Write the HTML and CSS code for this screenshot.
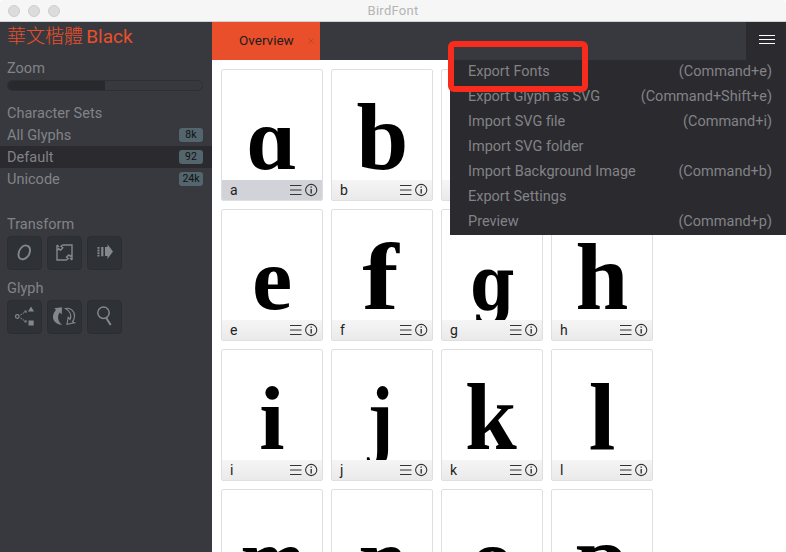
FILE: index.html
```html
<!DOCTYPE html>
<html lang="en">
<head>
<meta charset="utf-8">
<title>BirdFont</title>
<link rel="stylesheet" href="styles.css">
</head>
<body>
<header class="titlebar">
  <div class="lights"><i></i><i></i><i></i></div>
  <span>BirdFont</span>
</header>
<div class="app">
  <aside class="sidebar">
    <h1 class="font-name"><span class="cjk">華文楷體</span> Black</h1>
    <div class="label zoom-label">Zoom</div>
    <div class="slider"><div class="fill"></div></div>
    <div class="label sets-label">Character Sets</div>
    <div class="set"><span>All Glyphs</span><b>8k</b></div>
    <div class="set selected"><span>Default</span><b>92</b></div>
    <div class="set"><span>Unicode</span><b>24k</b></div>
    <div class="label transform-label">Transform</div>
    <div class="tools">
      <button class="tool"><svg viewBox="0 0 35 34"><path d="M20.500 9.800C24 11 23.500 16.500 21.300 19.800c-2.300 3.500-6.800 4.500-8.800 2.200-2-2.400-.8-7.300 1.500-10 1.800-2.200 4.500-3 6.500-2.200z" fill="none" stroke="#84888c" stroke-width="1.900"/></svg></button>
      <button class="tool"><svg viewBox="0 0 35 34"><path d="M15.500 9h9.500v9.500M19.500 24H10V14.500M10 9v5.500l1.800-1.800 1.700 1.500 2.300-2.400-1.800-1.500L15.500 9M25 24v-5.500l-1.600 1.700-1.700-1.300-2.200 2.300 1.700 1.400L19.500 24M10 9l2 2M25 24l-2-2" fill="none" stroke="#84888c" stroke-width="1.400"/></svg></button>
      <button class="tool"><svg viewBox="0 0 35 34" fill="#84888c"><path d="M18 11h2.500V8.200l5.500 7.300-5.500 7.500v-3H18zM14.200 11h2.200v9.200h-2.200z"/><path d="M11.500 11v9.500" fill="none" stroke="#84888c" stroke-width="2" stroke-dasharray="1.800 .8"/></svg></button>
    </div>
    <div class="label glyph-label">Glyph</div>
    <div class="tools">
      <button class="tool"><svg viewBox="0 0 35 34" fill="#84888c"><circle cx="10.300" cy="16.500" r="1.800" fill="none" stroke="#84888c" stroke-width="1.200"/><path d="M13.500 15l6-4m-2.300.2 2.300-.2-.7 2M13.500 18l6 4m-2.300-.2 2.300.2-.7-2" fill="none" stroke="#84888c" stroke-width="1" stroke-dasharray="2 .8"/><path d="M24 6.500l3 5h-6zM21.500 20.500h5.200v5h-5.200z"/></svg></button>
      <button class="tool"><svg viewBox="0 0 35 34"><path d="M15 25C8 24.500 4.500 19 6.500 14c.7-2 1.500-3 2.500-4L7.300 8.200l7.700-1-.3 7.300-2-2c-3 4-1.600 9 2.300 12.500z" fill="#84888c"/><path d="M18.500 8.500c5-1 9.500 2.500 9 8-.2 2.200-1 4-2 5.200l2 1-7.500 1.500 1.200-7 1.800 2.200c2-4 0-8.500-4.500-10.900z" fill="none" stroke="#84888c" stroke-width="1.100"/></svg></button>
      <button class="tool"><svg viewBox="0 0 35 34"><circle cx="16.500" cy="12.800" r="5.700" fill="none" stroke="#84888c" stroke-width="1.500"/><path d="M19.300 18l4.400 7" stroke="#84888c" stroke-width="2"/></svg></button>
    </div>
  </aside>
  <main class="main">
    <nav class="tabs">
      <div class="tab"><span>Overview</span><svg viewBox="0 0 6 6"><path d="M.5 .5l5 5M5.500 .5l-5 5" stroke="#c2452a" stroke-width="1"/></svg></div>
      <div class="menu-button"><i></i><i></i><i></i></div>
    </nav>
    <section class="grid" id="grid"></section>
    <div class="menu">
      <div><span>Export Fonts</span><span>(Command+e)</span></div>
      <div><span>Export Glyph as SVG</span><span>(Command+Shift+e)</span></div>
      <div><span>Import SVG file</span><span>(Command+i)</span></div>
      <div><span>Import SVG folder</span></div>
      <div><span>Import Background Image</span><span>(Command+b)</span></div>
      <div><span>Export Settings</span></div>
      <div><span>Preview</span><span>(Command+p)</span></div>
    </div>
    <div class="highlight"></div>
  </main>
</div>
<script src="glyphs.js"></script>
</body>
</html>
```
FILE: glyphs.js
```js
// name, drawn character, centre x, font size, horizontal scale, family class
const glyphs = [
  ["a", "ɑ", 49.5, 88, 1, ""], ["b", "b", 50.5, 96, 0.97, ""], ["c", "c", 50, 88, 1, ""], ["d", "d", 50, 96, 1, ""],
  ["e", "e", 50, 88, 1.03, ""], ["f", "f", 48.5, 96, 1.14, ""], ["g", "g", 50.5, 75, 0.84, "slab"], ["h", "h", 50, 96, 0.99, ""],
  ["i", "i", 50, 91, 1, ""], ["j", "j", 48.5, 91, 0.85, ""], ["k", "k", 49, 96, 0.97, ""], ["l", "l", 50, 96, 1, ""],
  ["m", "m", 51, 88, 0.88, ""], ["n", "n", 51, 88, 1, ""], ["o", "o", 50.5, 88, 1, ""], ["p", "p", 50, 94, 1, ""]
];
document.getElementById("grid").innerHTML = glyphs.map(([name, ch, x, size, sx, cls], i) => `
  <article class="card${i === 0 ? " active" : ""}">
    <svg class="glyph ${cls}" viewBox="0 0 100 110"><text transform="translate(${x} 99.3) scale(${sx} 1)" font-size="${size}" text-anchor="middle">${ch}</text></svg>
    <footer><span>${name}</span>
      <svg class="tools-icon" viewBox="0 0 28 14" fill="none" stroke="#333">
        <path d="M0 2.500h11.500M0 7h11.500M0 11.500h11.500" stroke-width="1.100"/>
        <circle cx="21.200" cy="7" r="5.600" stroke-width="1.100"/><path d="M21.200 6v4.600M21.200 3.400v1.400" stroke-width="1.400"/>
      </svg>
    </footer>
  </article>`).join("");
```
FILE: styles.css
```css
* { box-sizing: border-box; }
body { margin: 0; width: 786px; height: 552px; overflow: hidden; background: #fff; font: 14.5px Roboto, sans-serif; }
.titlebar { height: 22px; background: #f6f6f6; border-bottom: 1px solid #cfd2d3; position: relative; text-align: center; line-height: 22px; font-size: 13px; letter-spacing: .25px; color: #b4b4b4; border-radius: 4px 4px 0 0; }
.lights { position: absolute; left: 8px; top: 5px; display: flex; gap: 8px; }
.lights i { width: 12px; height: 12px; border-radius: 50%; background: #dcdcdc; border: 1px solid #cecece; }
.app { display: flex; height: 530px; }
.sidebar { width: 212px; background: #38393e; color: #828386; letter-spacing: .02px; }
.font-name { margin: 0; padding-left: 7px; height: 38px; line-height: 26px; font-size: 19px; font-weight: 400; color: #ea4f2b; letter-spacing: 0; word-spacing: -1.5px; white-space: nowrap; }
.cjk { font-family: "Noto Sans CJK TC", sans-serif; font-weight: 300; }
.label { padding-left: 7px; height: 20px; line-height: 20px; }
.zoom-label { margin-top: -1px; }
.slider { margin: 1px 9px 0 7px; height: 11px; border: 1px solid #2e2f33; border-radius: 6px; overflow: hidden; }
.fill { width: 50%; height: 100%; background: #29292d; }
.sets-label { margin-top: 13px; }
.set { display: flex; justify-content: space-between; align-items: center; height: 22px; padding: 0 9px 0 7px; }
.set.selected { background: #2b2a2f; }
.set b { width: 24px; height: 14px; line-height: 14px; border-radius: 3px; background: #53656d; color: #111; font-size: 10.5px; font-weight: 400; text-align: center; }
.transform-label { margin-top: 25px; }
.glyph-label { margin-top: 9px; }
.tools { display: flex; gap: 5px; padding: 1px 0 0 6.500px; }
.tool { width: 35px; height: 34px; padding: 0; border: 1px solid #2b2d30; border-radius: 4px; background: #2e3135; }
.tool svg { display: block; width: 35px; height: 34px; margin: -1px; }
.main { position: relative; flex: 1; height: 530px; overflow: hidden; }
.tabs { display: flex; justify-content: space-between; height: 38px; background: #38393e; }
.tab { width: 108px; background: #ea4f2b; display: flex; align-items: center; padding-left: 27px; gap: 14px; font-size: 13.5px; line-height: 16px; padding-bottom: 2px; color: #1d1d1d; letter-spacing: 0; }
.tab svg { width: 6px; height: 6px; position: relative; top: 1px; }
.menu-button { width: 40px; background: #2b2a2f; padding: 13px 0 0 13px; display: flex; flex-direction: column; gap: 3px; }
.menu-button i { width: 16px; height: 1px; background: #fff; }
.grid { display: grid; grid-template-columns: repeat(4, 102px); grid-auto-rows: 132px; gap: 8px; padding: 9px; }
.card { border: 1px solid #dfdfe3; border-radius: 2px; background: #fff; overflow: hidden; }
.glyph { display: block; width: 100px; height: 110px; overflow: hidden; font-family: "Liberation Serif", serif; font-weight: 700; }
.slab { font-family: "DejaVu Serif", serif; }
.card footer { display: flex; justify-content: space-between; align-items: center; height: 20px; padding: 0 3px 0 8px; background: linear-gradient(#f5f5f5, #eaeaea); color: #222; line-height: 18px; font-size: 14px; }
.active footer { background: #d2d3d8; }
.tools-icon { width: 28px; height: 14px; margin-right: 1px; }
.menu { position: absolute; top: 38px; right: 0; width: 336px; height: 175px; background: #2b2a2f; color: #828386; letter-spacing: 0; }
.menu div { display: flex; justify-content: space-between; height: 25px; line-height: 24px; padding: 0 14px 0 18px; }
.highlight { position: absolute; left: 236px; top: 19px; width: 140px; height: 51px; border: 6px solid #f92b1c; border-radius: 6px; }
```
